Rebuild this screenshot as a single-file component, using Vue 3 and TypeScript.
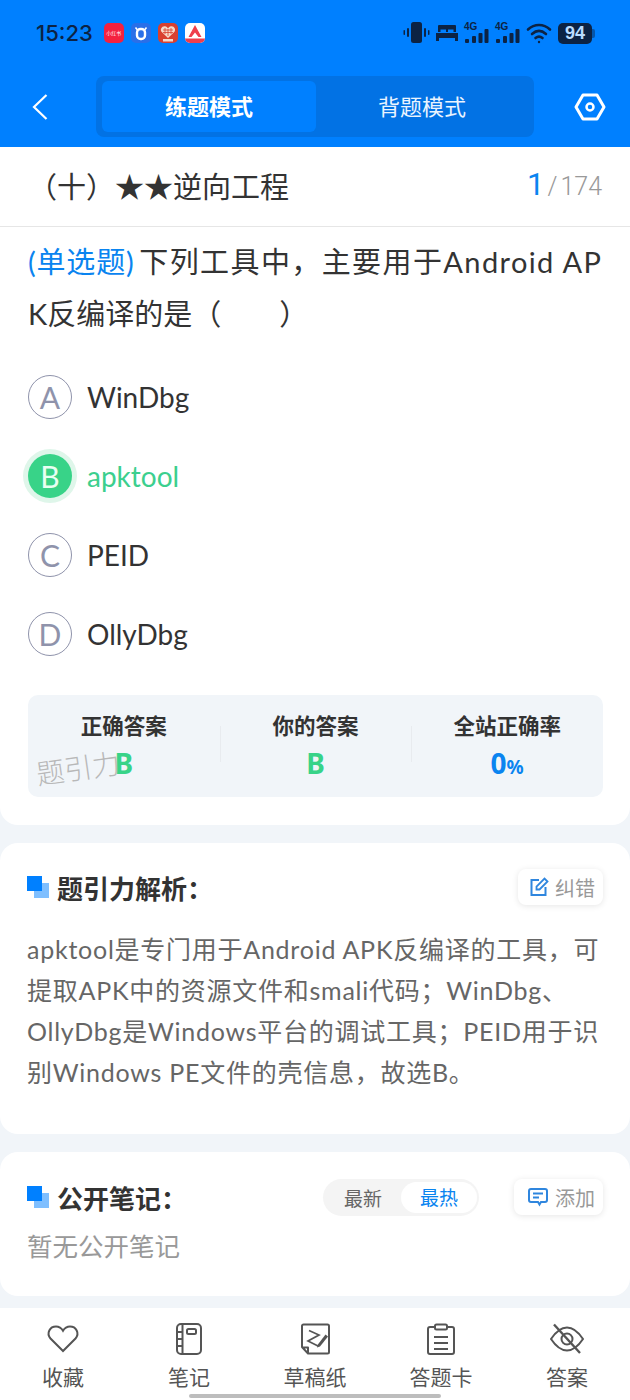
<script setup lang="ts">
const options = [
  { key: "A", text: "WinDbg" },
  { key: "B", text: "apktool", picked: true },
  { key: "C", text: "PEID" },
  { key: "D", text: "OllyDbg" },
];
</script>

<template>
  <div class="page">
    <header class="top">
      <div class="status">
        <span class="time">15:23</span>
        <div class="apps">
          <span class="app red">小红书</span>
          <span class="app blue">
            <svg viewBox="0 0 20 20" width="20" height="20" fill="none" stroke="#fff"><rect x="6" y="6" width="8" height="10" rx="3.500" stroke-width="2.400" /><path d="M4.500 4.500 6.500 7M15.500 4.500 13.500 7" stroke-width="1.600" /></svg>
          </span>
          <span class="app heart">
            <svg viewBox="0 0 20 20" width="20" height="20"><path d="M10 15 3.500 8.800C1.800 6.500 3.800 2.800 7 3.300c1.400.2 2.400 1.200 3 2.200.6-1 1.600-2 3-2.200 3.200-.5 5.200 3.200 3.500 5.500Z" fill="#f6d9c9" /><path d="M5 7h10M5 9.500h10M7 5v6M10 6v7M13 5v6" stroke="#d9402f" stroke-width=".8" /><rect x="5" y="16" width="10" height="2.500" fill="#f6d9c9" /></svg>
          </span>
          <span class="app white">
            <svg viewBox="0 0 20 20" width="20" height="20"><path d="M10 2 16.500 14h-3L10 9.500 6.500 14h-3Z" fill="#ef3e4c" /><rect x="0" y="15.500" width="20" height="4.500" fill="#ef3e4c" /></svg>
          </span>
        </div>
        <div class="sys">
          <svg viewBox="0 0 27 22" width="27" height="22" fill="#0c2344"><rect x="8" y="0" width="11" height="21" rx="2.500" /><rect x="4" y="6" width="2" height="9" rx="1" /><rect x="0.500" y="8" width="1.500" height="5" rx=".7" /><rect x="21" y="6" width="2" height="9" rx="1" /><rect x="25" y="8" width="1.500" height="5" rx=".7" /></svg>
          <svg viewBox="0 0 22 18" width="22" height="18" fill="#0c2344"><path d="M3 1h16a1 1 0 0 1 1 1v6h-2.500V5.500H12V8h-2V5.500H4.500V8H2V2a1 1 0 0 1 1-1Z" /><path d="M0 9h22v8h-3v-3H3v3H0Z" /></svg>
          <span class="net">
            <i class="g">4G</i>
            <svg viewBox="0 0 25 22" width="25" height="22" fill="#0c2344"><rect x="1" y="17" width="4" height="4" rx="1" /><rect x="8" y="14" width="4" height="7" rx="1" /><rect x="14.500" y="11" width="4" height="10" rx="1" /><rect x="20.500" y="7" width="4" height="14" rx="1" /></svg>
          </span>
          <span class="net">
            <i class="g">4G</i>
            <svg viewBox="0 0 25 22" width="25" height="22" fill="#0c2344"><rect x="1" y="17" width="4" height="4" rx="1" /><rect x="8" y="14" width="4" height="7" rx="1" /><rect x="14.500" y="11" width="4" height="10" rx="1" /><rect x="20.500" y="7" width="4" height="14" rx="1" /></svg>
          </span>
          <svg viewBox="0 0 26 22" width="26" height="22" fill="none" stroke="#0c2344" stroke-width="2.600" stroke-linecap="round"><path d="M2 7.500C8.500 1.500 17.500 1.500 24 7.500" /><path d="M6 12c4.500-4 9.500-4 14 0" /><path d="M9.500 16c2.200-1.800 4.800-1.800 7 0" /><circle cx="13" cy="20" r="1.200" fill="#0c2344" stroke="none" /></svg>
          <span class="batt"><b>94</b></span>
        </div>
      </div>
      <div class="nav">
        <svg class="back" viewBox="0 0 16 28" width="16" height="28" fill="none" stroke="#fff" stroke-width="2.200"><path d="M14.500 2 2 14l12.500 12" /></svg>
        <div class="modes">
          <span class="mode on">练题模式</span>
          <span class="mode">背题模式</span>
        </div>
        <svg class="gear" viewBox="0 0 32 28" width="32" height="28" fill="none" stroke="#fff"><path d="M9 2h14l7 12-7 12H9L2 14Z" stroke-width="3" stroke-linejoin="round" /><circle cx="16" cy="14" r="3.500" stroke-width="2.500" /></svg>
      </div>
    </header>

    <main class="sheet">
      <section class="card question">
        <div class="chapter">
          <span class="chapter-name">（十）★★逆向工程</span>
          <span class="count"><em>1</em><span class="slash">/</span>174</span>
        </div>
        <p class="stem"><span class="tag">(单选题)</span> 下列工具中，主要用于Android AP<br /><span class="stem-end">K反编译的是（&emsp;&emsp;&ensp;）</span></p>
        <ul class="options">
          <li v-for="o in options" :key="o.key" class="option" :class="{ picked: o.picked }">
            <span class="letter">{{ o.key }}</span>
            <span>{{ o.text }}</span>
          </li>
        </ul>
        <div class="stats">
          <div class="stat">
            <strong>正确答案</strong>
            <b class="green">B</b>
          </div>
          <div class="stat">
            <strong>你的答案</strong>
            <b class="green">B</b>
          </div>
          <div class="stat">
            <strong>全站正确率</strong>
            <b class="blue-num">0<small>%</small></b>
          </div>
          <span class="watermark">题引力</span>
        </div>
      </section>

      <section class="card analysis">
        <div class="head">
          <span class="mark"></span>
          <h2>题引力解析：</h2>
          <button class="chip">
            <svg viewBox="0 0 20 20" width="20" height="20" fill="none" stroke="#2f86de" stroke-width="2"><path d="M10 3H2.500v15h14V10" /><path d="M7.500 12.500v-3L15.500 1.500l3 3-8 8Z" stroke-width="1.800" /></svg>
            纠错
          </button>
        </div>
        <p class="body">apktool是专门用于Android APK反编译的工具，可提取APK中的资源文件和smali代码；WinDbg、OllyDbg是Windows平台的调试工具；PEID用于识别Windows PE文件的壳信息，故选B。</p>
      </section>

      <section class="card notes">
        <div class="head">
          <span class="mark"></span>
          <h2>公开笔记：</h2>
          <div class="sort">
            <span>最新</span>
            <span class="sort-on">最热</span>
          </div>
          <button class="chip add">
            <svg viewBox="0 0 22 20" width="22" height="20" fill="none" stroke="#2f86de" stroke-width="2"><path d="M4 2h14a2 2 0 0 1 2 2v9a2 2 0 0 1-2 2H14l-1.500 2.500L11 15H4a2 2 0 0 1-2-2V4a2 2 0 0 1 2-2Z" /><path d="M6 6.500h10M6 10.500h6" /></svg>
            添加
          </button>
        </div>
        <p class="empty">暂无公开笔记</p>
      </section>
    </main>

    <footer class="tabs">
      <div class="tab">
        <svg viewBox="0 0 34 32" width="34" height="32" fill="none" stroke="#555" stroke-width="2"><path d="M17 28 4.500 15.500C0 10 4 3.500 10 3.500c3 0 5.500 1.700 7 4.200 1.500-2.500 4-4.200 7-4.200 6 0 10 6.500 5.500 12Z" /></svg>
        <span>收藏</span>
      </div>
      <div class="tab">
        <svg viewBox="0 0 30 32" width="30" height="32" fill="none" stroke="#555" stroke-width="2"><rect x="3" y="1" width="24" height="30" rx="4" /><path d="M8.500 1v30M3 9h5.500M3 16h5.500M3 23h5.500" /><rect x="13" y="6" width="9" height="5" rx="1.500" /></svg>
        <span>笔记</span>
      </div>
      <div class="tab">
        <svg viewBox="0 0 32 32" width="32" height="32" fill="none" stroke="#555" stroke-width="2"><path d="M9 30.500H28.500A1.500 1.500 0 0 0 30 29V3a1.500 1.500 0 0 0-1.500-1.500H4.500A1.500 1.500 0 0 0 3 3v21l6 6.500v-6H3" stroke-linejoin="round" /><path d="M10 7.500 20 12 9 18l10 5" stroke-width="1.700" /><path d="M18.500 22 26.500 11.500l2.500 2-8 10-3 1Z" fill="#555" stroke="none" /></svg>
        <span>草稿纸</span>
      </div>
      <div class="tab">
        <svg viewBox="0 0 30 32" width="30" height="32" fill="none" stroke="#555" stroke-width="2"><path d="M9 4H4a2 2 0 0 0-2 2v23a2 2 0 0 0 2 2h22a2 2 0 0 0 2-2V6a2 2 0 0 0-2-2h-5" /><rect x="9" y="1.500" width="12" height="5" rx="1.500" /><path d="M8 14h14M8 20h14M8 26h14" /></svg>
        <span>答题卡</span>
      </div>
      <div class="tab">
        <svg viewBox="0 0 36 32" width="36" height="32" fill="none" stroke="#555" stroke-width="2"><path d="M2 16C8 7 14 4.500 18 4.500S28 7 34 16c-6 9-12 11.500-16 11.500S8 25 2 16Z" /><circle cx="18" cy="16" r="5.500" /><path d="M5 1.500 31 30" stroke-width="2.400" /></svg>
        <span>答案</span>
      </div>
      <span class="home-bar"></span>
    </footer>
  </div>
</template>

<style>
html,
body {
  margin: 0;
  background: #f1f5f9;
}
</style>

<style scoped>
.page {
  width: 630px;
  height: 1400px;
  display: flex;
  flex-direction: column;
  overflow: hidden;
  background: #f1f5f9;
  font-family: Lato, "Noto Sans CJK SC", sans-serif;
  color: #333;
}
.top {
  height: 147px;
  flex: none;
  background: #0080ff;
  box-sizing: border-box;
  padding-top: 19px;
}
.status {
  height: 28px;
  display: flex;
  align-items: center;
  padding: 0 38px 0 36px;
}
.time {
  font-family: Inter, Roboto, sans-serif;
  font-size: 22px;
  font-weight: 500;
  color: #0c2344;
}
.apps {
  display: flex;
  gap: 7px;
  margin-left: 11px;
}
.app {
  width: 20px;
  height: 20px;
  border-radius: 5px;
  overflow: hidden;
  display: block;
  font-size: 5px;
  line-height: 20px;
  text-align: center;
  color: #fff;
}
.app svg {
  display: block;
}
.red {
  background: #f4213f;
}
.blue {
  background: #2a6fe8;
}
.heart {
  background: #d9402f;
}
.white {
  background: #fff;
}
.sys {
  margin-left: auto;
  display: flex;
  align-items: center;
  gap: 6px;
}
.net {
  position: relative;
  display: block;
  height: 22px;
}
.net svg {
  display: block;
}
.g {
  position: absolute;
  left: 0;
  top: -1px;
  font: normal 700 10px "Liberation Sans", sans-serif;
  color: #0c2344;
}
.batt {
  position: relative;
  width: 34px;
  height: 21px;
  background: #0c2344;
  border-radius: 5px;
  text-align: center;
}
.batt::after {
  content: "";
  position: absolute;
  right: -3px;
  top: 6px;
  width: 3px;
  height: 9px;
  border-radius: 0 2px 2px 0;
  background: rgba(12, 35, 68, 0.45);
}
.batt b {
  font: 700 18px/21px "Liberation Sans", sans-serif;
  color: #b9dcff;
}
.nav {
  display: flex;
  align-items: center;
  justify-content: space-between;
  margin-top: 29px;
  padding: 0 24px 0 32px;
}
.modes {
  width: 438px;
  height: 61px;
  box-sizing: border-box;
  padding: 5px 0 5px 6px;
  background: #0272e4;
  border-radius: 8px;
  display: flex;
  margin-left: 8px;
}
.mode {
  width: 214px;
  font-size: 22px;
  line-height: 51px;
  text-align: center;
  color: #eaf4ff;
}
.mode.on {
  background: #0080ff;
  border-radius: 6px;
  font-weight: 700;
  color: #fff;
}
.mode + .mode {
  width: 212px;
}
.sheet {
  flex: 1;
  min-height: 0;
  display: flex;
  flex-direction: column;
  gap: 18px;
}
.card {
  background: #fff;
  border-radius: 18px;
}
.question {
  border-radius: 0 0 18px 18px;
  height: 678px;
  box-sizing: border-box;
}
.chapter {
  height: 80px;
  box-sizing: border-box;
  border-bottom: 1px solid #e6e6e6;
  display: flex;
  align-items: center;
  justify-content: space-between;
  padding: 0 28px 4px;
}
.chapter-name {
  font-size: 29px;
  color: #333;
}
.count {
  font-family: Roboto, sans-serif;
  font-weight: 300;
  font-size: 25px;
  color: #999;
}
.count em {
  font-style: normal;
  font-weight: 400;
  font-size: 31px;
  color: #0a84f0;
}
.slash {
  margin: 0 3px;
}
.stem {
  margin: 9px 0 0 28px;
  font-size: 29px;
  line-height: 52px;
  letter-spacing: 1.4px;
  color: #333;
  white-space: nowrap;
}
.tag {
  color: #0a84f0;
  letter-spacing: 0.8px;
  margin-right: -4px;
}
.stem-end {
  letter-spacing: 0;
}
.options {
  list-style: none;
  margin: 35px 0 0;
  padding: 0 0 0 28px;
  display: flex;
  flex-direction: column;
  gap: 35px;
}
.option {
  display: flex;
  align-items: center;
  gap: 15px;
  font-size: 28px;
  height: 44px;
  color: #333;
}
.letter {
  width: 44px;
  height: 44px;
  box-sizing: border-box;
  border: 1.500px solid #8f93ab;
  border-radius: 50%;
  color: #8f93ab;
  display: flex;
  align-items: center;
  justify-content: center;
  font-size: 30px;
}
.picked {
  color: #3ccf8e;
}
.picked .letter {
  background: #38d388;
  border: 0;
  color: #e8fff2;
  box-shadow: 0 0 0 5px #dff6ea;
}
.stats {
  position: relative;
  margin: 39px 27px 0 28px;
  height: 102px;
  background: #f1f5f9;
  border-radius: 10px;
  display: grid;
  grid-template-columns: repeat(3, 1fr);
  padding: 15px 0 0;
  box-sizing: border-box;
}
.stat {
  display: flex;
  flex-direction: column;
  align-items: center;
  height: 70px;
  position: relative;
}
.stat + .stat::before {
  content: "";
  position: absolute;
  left: 0;
  top: 16px;
  height: 36px;
  width: 1px;
  background: #e8ebef;
}
.stat strong {
  font-size: 21.500px;
  line-height: 32px;
  font-weight: 700;
  color: #333;
}
.stat b {
  font-family: "Noto Sans", sans-serif;
  font-size: 28px;
  line-height: 42px;
  font-weight: 700;
}
.green {
  color: #38d388;
}
.blue-num {
  color: #0a84f0;
}
.blue-num small {
  font-size: 19px;
}
.watermark {
  position: absolute;
  left: 8px;
  top: 57px;
  font-size: 28px;
  line-height: 32px;
  color: #b8b8b8;
  font-weight: 300;
  transform: rotate(-8deg);
}
.analysis {
  height: 291px;
  flex: none;
  box-sizing: border-box;
  padding: 25px 27px 0 27px;
}
.head {
  display: flex;
  align-items: center;
  height: 38px;
}
.mark {
  width: 22px;
  height: 22px;
  flex: none;
  background:
    linear-gradient(#0080ff, #0080ff) 0 0 / 15px 15px no-repeat,
    linear-gradient(#7fbfff, #7fbfff) 7px 7px / 15px 15px no-repeat;
}
h2 {
  margin: 0 0 0 8px;
  font-size: 26px;
  font-weight: 700;
  color: #333;
  flex: 1;
}
.chip {
  border: 0;
  background: #fff;
  border-radius: 8px;
  box-shadow: 0 1px 6px rgba(0, 0, 0, 0.1);
  height: 36px;
  padding: 0 8px 0 11px;
  display: flex;
  align-items: center;
  gap: 6px;
  font: inherit;
  font-size: 20px;
  color: #999;
}
.chip.add {
  padding-left: 13px;
}
.body {
  margin: 23px 0 0;
  font-size: 25px;
  line-height: 41px;
  letter-spacing: 0.75px;
  color: #666;
}
.notes {
  height: 144px;
  flex: none;
  box-sizing: border-box;
  padding: 26px 27px 0 27px;
}
.notes h2 {
  flex: none;
}
.sort {
  margin-left: auto;
  margin-right: 35px;
  width: 156px;
  height: 37px;
  border-radius: 19px;
  background: #f4f4f4;
  display: flex;
  align-items: center;
  box-sizing: border-box;
  padding: 3px 2px 3px 2px;
  font-size: 19px;
  color: #666;
}
.sort span {
  width: 76px;
  text-align: center;
}
.sort-on {
  background: #fff;
  border-radius: 16px;
  color: #0a84f0;
  line-height: 31px;
}
.empty {
  margin: 12px 0 0;
  font-size: 25.500px;
  line-height: 36px;
  color: #999;
}
.tabs {
  position: relative;
  flex: none;
  height: 92px;
  background: #fff;
  display: grid;
  grid-template-columns: repeat(5, 126px);
  padding-top: 15px;
  box-sizing: border-box;
}
.tab {
  display: flex;
  flex-direction: column;
  align-items: center;
  gap: 7px;
  font-size: 21px;
  line-height: 30px;
  color: #555;
}
.home-bar {
  position: absolute;
  left: 189px;
  bottom: 2px;
  width: 252px;
  height: 4px;
  border-radius: 2px;
  background: #bdbdbd;
}
</style>
